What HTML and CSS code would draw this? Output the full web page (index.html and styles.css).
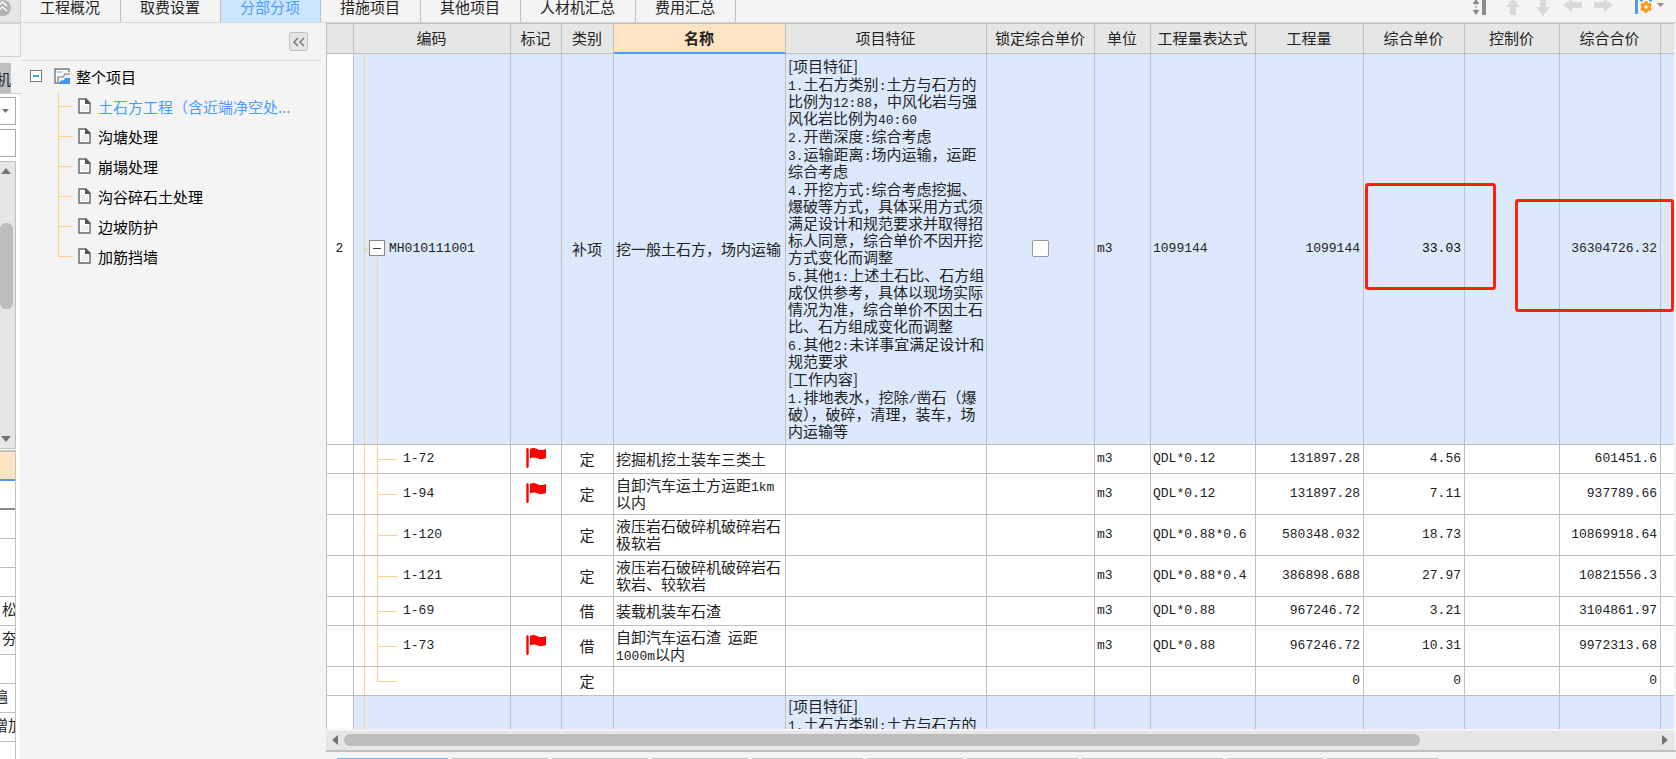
FILE: index.html
```html
<!DOCTYPE html>
<html lang="zh-CN">
<head>
<meta charset="utf-8">
<title>分部分项</title>
<link rel="stylesheet" href="styles.css">
</head>
<body>
<header class="topbar">
  <button class="fold" aria-label="收起"><svg width="13" height="17" viewBox="0 0 13 17"><circle cx="3" cy="8" r="8" fill="#b3b3b3"/><path d="M-2 6l4.500-4L7 6M-2 11l4.500-4L7 11" fill="none" stroke="#fff" stroke-width="1.600"/></svg></button>
  <nav class="tabs">
    <button class="tab">工程概况</button><button class="tab">取费设置</button><button class="tab active">分部分项</button><button class="tab">措施项目</button><button class="tab">其他项目</button><button class="tab">人材机汇总</button><button class="tab">费用汇总</button>
  </nav>
  <div class="tools">
    <button aria-label="行高"><svg width="20" height="16" viewBox="0 0 20 16"><path d="M3-1l3.500 5h-7zM3 15l3.500-5h-7z" fill="#8c8c8c"/><path d="M3 3v8" stroke="#8c8c8c" stroke-dasharray="2 1"/><path d="M9 0h4v15H9z" fill="#8c8c8c"/></svg></button>
    <button aria-label="上移"><svg width="20" height="16" viewBox="0 0 20 16"><path d="M10-2l7 9h-4v8H7V7H3z" fill="#d9d9d9"/></svg></button>
    <button aria-label="下移"><svg width="20" height="16" viewBox="0 0 20 16"><path d="M10 16l7-9h-4V0H7v7H3z" fill="#d9d9d9"/></svg></button>
    <button aria-label="左移"><svg width="20" height="16" viewBox="0 0 20 16"><path d="M0 5l9-6v3h10v6H9v4z" fill="#d9d9d9"/></svg></button>
    <button aria-label="右移"><svg width="20" height="16" viewBox="0 0 20 16"><path d="M20 5l-9-6v3H1v6h10v4z" fill="#d9d9d9"/></svg></button>
    <button class="set" aria-label="设置"><svg width="30" height="16" viewBox="0 0 30 16"><path d="M0 0h3v14H0z" fill="#4a9cf8"/><path d="M5 0h3M14 0h3" stroke="#4a9cf8" stroke-width="3"/><g fill="#f99d27"><circle cx="11" cy="7" r="4.500"/><circle cx="11" cy="3" r="2"/><circle cx="11" cy="11" r="2"/><circle cx="7.500" cy="5" r="2"/><circle cx="14.500" cy="5" r="2"/><circle cx="7.500" cy="9" r="2"/><circle cx="14.500" cy="9" r="2"/></g><circle cx="11" cy="7" r="1.700" fill="#fff"/><path d="M22 3h7l-3.500 4z" fill="#8c8c8c"/></svg></button>
  </div>
</header>
<div class="work">
  <aside class="strip">
    <div class="strip-head"></div>
    <div class="strip-tab"><span>机</span></div>
    <div class="strip-body">
      <button class="combo" aria-label="选择"><svg width="7" height="4" viewBox="0 0 7 4"><path d="M0 0h7L3.500 4z" fill="#777"/></svg></button>
      <input class="field" aria-label="查找">
      <div class="vscroll">
        <svg width="10" height="6" viewBox="0 0 10 6"><path d="M0 6h10L5 0z" fill="#73737d"/></svg>
        <i class="vthumb"></i>
        <svg width="10" height="6" viewBox="0 0 10 6"><path d="M0 0h10L5 6z" fill="#73737d"/></svg>
      </div>
      <ul class="mini">
        <li class="mini-head"></li><li class="dark"></li><li></li><li></li><li></li><li>松</li><li>夯</li><li></li><li class="cut">遍</li><li class="cut">增加</li><li></li>
      </ul>
    </div>
  </aside>
  <aside class="side">
    <div class="side-head"><button class="collapse" aria-label="折叠"><svg width="12" height="10" viewBox="0 0 12 10"><path d="M5 1L1 5l4 4M11 1L7 5l4 4" fill="none" stroke="#777" stroke-width="1.500"/></svg></button></div>
    <div class="root">
      <button class="exp" aria-label="展开"></button>
      <svg width="16" height="16" viewBox="0 0 16 16"><path d="M15 4V1H1v14h5" fill="#f8f8f8" stroke="#777" stroke-width="1.400"/><path d="M3 3h5v2H3z" fill="#a5d4ff"/><path d="M4 14V9h5l2-3h5" fill="none" stroke="#777" stroke-width="1.200"/><path d="M6 16v-3l4-1 1-2h5v6z" fill="#3f94f7"/></svg>
      <span>整个项目</span>
    </div>
    <ul class="tree">
      <li class="on"><svg class="doc"><use href="#doc"/></svg><a href="#a">土石方工程（含近端净空处...</a></li>
      <li><svg class="doc"><use href="#doc"/></svg><a href="#b">沟塘处理</a></li>
      <li><svg class="doc"><use href="#doc"/></svg><a href="#c">崩塌处理</a></li>
      <li><svg class="doc"><use href="#doc"/></svg><a href="#d">沟谷碎石土处理</a></li>
      <li><svg class="doc"><use href="#doc"/></svg><a href="#e">边坡防护</a></li>
      <li><svg class="doc"><use href="#doc"/></svg><a href="#f">加筋挡墙</a></li>
    </ul>
  </aside>
  <main class="main">
    <div class="grid">
      <table>
        <colgroup><col class="c27"><col class="c157"><col class="c51"><col class="c52"><col class="c172"><col class="c201"><col class="c108"><col class="c56"><col class="c105"><col class="c108"><col class="c101"><col class="c95"><col class="c101"><col></colgroup>
        <thead><tr><th></th><th>编码</th><th>标记</th><th>类别</th><th class="cur">名称</th><th>项目特征</th><th>锁定综合单价</th><th>单位</th><th>工程量表达式</th><th>工程量</th><th>综合单价</th><th>控制价</th><th>综合合价</th><th></th></tr></thead>
        <tbody>
          <tr class="item big"><td class="no">2</td><td class="code parent"><button class="minus" aria-label="折叠"></button>MH010111001</td><td></td><td class="mid">补项</td><td>挖一般土石方，场内运输</td>
            <td class="feat"><div class="paras"><p>[项目特征]</p><p><b>1.</b>土石方类别<b>:</b>土方与石方的<br>比例为<b>12:88</b>，中风化岩与强<br>风化岩比例为<b>40:60</b></p><p><b>2.</b>开凿深度<b>:</b>综合考虑</p><p><b>3.</b>运输距离<b>:</b>场内运输，运距<br>综合考虑</p><p><b>4.</b>开挖方式<b>:</b>综合考虑挖掘、<br>爆破等方式，具体采用方式须<br>满足设计和规范要求并取得招<br>标人同意，综合单价不因开挖<br>方式变化而调整</p><p><b>5.</b>其他<b>1:</b>上述土石比、石方组<br>成仅供参考，具体以现场实际<br>情况为准，综合单价不因土石<br>比、石方组成变化而调整</p><p><b>6.</b>其他<b>2:</b>未详事宜满足设计和<br>规范要求</p><p>[工作内容]</p><p><b>1.</b>排地表水，挖除<b>/</b>凿石（爆<br>破），破碎，清理，装车，场<br>内运输等</p></div></td>
            <td class="mid"><input type="checkbox" class="ck" aria-label="锁定综合单价"></td><td class="m">m3</td><td class="m">1099144</td><td class="num">1099144</td><td class="num strong">33.03</td><td></td><td class="num">36304726.32</td><td></td></tr>
          <tr class="short"><td></td><td class="code sub">1-72</td><td class="mid"><svg class="flag"><use href="#flag"/></svg></td><td class="mid">定</td><td>挖掘机挖土装车三类土</td><td></td><td></td><td class="m">m3</td><td class="m">QDL*0.12</td><td class="num">131897.28</td><td class="num">4.56</td><td></td><td class="num">601451.6</td><td></td></tr>
          <tr class="tall"><td></td><td class="code sub">1-94</td><td class="mid"><svg class="flag"><use href="#flag"/></svg></td><td class="mid">定</td><td>自卸汽车运土方运距<b>1km</b><br>以内</td><td></td><td></td><td class="m">m3</td><td class="m">QDL*0.12</td><td class="num">131897.28</td><td class="num">7.11</td><td></td><td class="num">937789.66</td><td></td></tr>
          <tr class="tall"><td></td><td class="code sub">1-120</td><td></td><td class="mid">定</td><td>液压岩石破碎机破碎岩石<br>极软岩</td><td></td><td></td><td class="m">m3</td><td class="m">QDL*0.88*0.6</td><td class="num">580348.032</td><td class="num">18.73</td><td></td><td class="num">10869918.64</td><td></td></tr>
          <tr class="tall"><td></td><td class="code sub">1-121</td><td></td><td class="mid">定</td><td>液压岩石破碎机破碎岩石<br>软岩、较软岩</td><td></td><td></td><td class="m">m3</td><td class="m">QDL*0.88*0.4</td><td class="num">386898.688</td><td class="num">27.97</td><td></td><td class="num">10821556.3</td><td></td></tr>
          <tr class="short"><td></td><td class="code sub">1-69</td><td></td><td class="mid">借</td><td>装载机装车石渣</td><td></td><td></td><td class="m">m3</td><td class="m">QDL*0.88</td><td class="num">967246.72</td><td class="num">3.21</td><td></td><td class="num">3104861.97</td><td></td></tr>
          <tr class="tall"><td></td><td class="code sub">1-73</td><td class="mid"><svg class="flag"><use href="#flag"/></svg></td><td class="mid">借</td><td>自卸汽车运石渣 &nbsp;运距<br><b>1000m</b>以内</td><td></td><td></td><td class="m">m3</td><td class="m">QDL*0.88</td><td class="num">967246.72</td><td class="num">10.31</td><td></td><td class="num">9972313.68</td><td></td></tr>
          <tr class="short"><td></td><td class="code sub last"></td><td></td><td class="mid">定</td><td></td><td></td><td></td><td></td><td></td><td class="num">0</td><td class="num">0</td><td></td><td class="num">0</td><td></td></tr>
          <tr class="item next"><td class="no"></td><td class="code"></td><td></td><td></td><td></td><td class="feat"><div class="paras"><p>[项目特征]</p><p><b>1.</b>土石方类别<b>:</b>土方与石方的</p></div></td><td></td><td></td><td></td><td></td><td></td><td></td><td></td><td></td></tr>
        </tbody>
      </table>
      <div class="mark mark-price"></div>
      <div class="mark mark-total"></div>
    </div>
    <div class="hscroll">
      <svg width="6" height="10" viewBox="0 0 6 10"><path d="M6 0v10L0 5z" fill="#73737d"/></svg>
      <div class="track"><div class="thumb"></div></div>
      <svg width="6" height="10" viewBox="0 0 6 10"><path d="M0 0v10l6-5z" fill="#73737d"/></svg>
    </div>
    <div class="lower"><i class="w111 sel"></i><i class="w96"></i><i class="w96"></i><i class="w96"></i><i class="w111"></i><i class="w96"></i><i class="w111"></i><i class="w141"></i><i class="w96"></i><i class="w111"></i></div>
  </main>
</div>
<svg class="defs" width="0" height="0">
  <symbol id="doc" viewBox="0 0 13 16"><path d="M1 1h7l4 4v10H1z" fill="#fff" stroke="#666" stroke-width="1.400"/><path d="M7 0l6 6H7z" fill="#555"/><path d="M3 8h7M3 10h7M3 12h7" stroke="#ddd"/></symbol>
  <symbol id="flag" viewBox="0 0 20 20"><path d="M0 1q1.500-1.500 3 0v18q-1.500 1.500-3 0z" fill="#ff5050"/><path d="M1 0h1v20H1zM4 1c3-1.500 5-1 8 .5 3 1 5 .5 8-.5v9c-3 1-5 1.500-8 .5-3-1-5-1.500-8 0z" fill="#f00"/></symbol>
</svg>
</body>
</html>
```
FILE: styles.css
```css
* { box-sizing: border-box; }
body { margin: 0; height: 100vh; overflow: hidden; display: flex; flex-direction: column; background: #f4f4f4; color: #222; font: 15px/17px "Noto Sans CJK SC", sans-serif; }
button { border: 0; background: none; padding: 0; font: inherit; color: inherit; }
ul { list-style: none; margin: 0; padding: 0; }
svg { display: block; flex: none; }
.defs { position: absolute; }

.topbar { display: flex; height: 23px; flex: none; border-bottom: 1px solid #d6d6d6; }
.fold { width: 21px; background: #e6e6e6; border-right: 1px solid #d0d0d0; display: flex; }
.tabs { display: flex; flex: 1; }
.tab { display: flex; padding: 0 20px 2px 19px; line-height: 14px; border-right: 1px solid #bfbfbf; white-space: nowrap; }
.tab.active { background: #cce6ff; color: #4a9cff; }
.tools { display: flex; gap: 10px; padding-right: 11px; align-items: flex-start; }
.tools .set { margin-left: 12px; }

.work { flex: 1; min-height: 0; display: flex; }
.strip { width: 21px; flex: none; display: flex; flex-direction: column; overflow: hidden; }
.strip-head { height: 34px; flex: none; border: 1px solid #d0d0d0; border-width: 1px 1px 1px 0; }
.strip-tab { height: 37px; flex: none; padding-top: 6px; border-bottom: 1px solid #ccc; }
.strip-tab span { display: flex; justify-content: flex-end; align-items: center; width: 11px; height: 30px; background: #bfbfbf; overflow: hidden; }
.strip-body { flex: 1; min-height: 0; display: flex; flex-direction: column; background: #fff; padding: 3px 3px 0 0; margin-right: 2px; }
.combo { height: 28px; flex: none; border: 1px solid #aaa; border-left: 0; display: flex; align-items: center; padding-left: 2px; background: #fff; }
.field { height: 28px; flex: none; width: 100%; margin: 4px 0; border: 1px solid #aaa; border-left: 0; background: #fff; padding: 0; }
.vscroll { height: 288px; flex: none; display: flex; flex-direction: column; align-items: flex-start; background: #e6e6e6; border: 1px solid #bfbfbf; border-left: 0; padding: 6px 0 6px 1px; }
.vthumb { width: 13px; height: 86px; margin: 49px 0 auto -1px; border-radius: 6px; background: #bdbdbd; }
.mini { flex: 1; overflow: hidden; margin-top: 1px; border: 2px solid #bfbfbf; border-width: 2px 1px 0 0; background: #fff; }
.mini li { height: 29px; padding: 3px 0 0 2px; border-bottom: 1px solid #bfbfbf; white-space: nowrap; overflow: hidden; }
.mini .mini-head { background: #ffe4c4; border-bottom: 2px solid #4a9cff; }
.mini .dark { border-bottom: 2px solid #888; }
.mini .cut { text-indent: -9px; }

.side { width: 305px; flex: none; }
.side-head { height: 38px; margin: 0 5px 0 2px; border-bottom: 1px solid #d6d6d6; padding: 9px 13px 0 0; display: flex; justify-content: flex-end; align-items: flex-start; }
.collapse { width: 19px; height: 19px; display: flex; align-items: center; justify-content: center; background: #e6e6e6; border: 1px solid #bfbfbf; border-radius: 3px; }
.root { display: flex; align-items: center; height: 30px; padding-left: 9px; color: #000; }
.root span { margin-left: 6px; }
.exp { width: 12px; height: 12px; margin-right: 12px; border: 1px solid #777; background: linear-gradient(#37a6e0, #37a6e0) center / 6px 2px no-repeat #fff; }
.tree { margin-left: 37px; }
.tree li { position: relative; display: flex; align-items: center; height: 30px; padding-left: 20px; gap: 7px; color: #000; }
.tree li::before { content: ""; position: absolute; left: 0; top: 0; bottom: 0; border-left: 1px solid #ffcf8c; }
.tree li:last-child::before { bottom: 50%; }
.tree li::after { content: ""; position: absolute; left: 0; top: 50%; width: 15px; border-top: 1px solid #ffcf8c; }
.tree .doc { width: 13px; height: 16px; }
.tree a { color: inherit; text-decoration: none; white-space: nowrap; }
.tree .on { color: #4a9cff; }

.main { flex: 1; min-width: 0; display: flex; flex-direction: column; }
.grid { position: relative; flex: 1; min-height: 0; overflow: hidden; margin: 0 2px 2px 0; border-left: 1px solid #bfbfbf; background: #fff; border-top: 1px solid #bfbfbf; }
table { width: 100%; table-layout: fixed; border-collapse: separate; border-spacing: 0; }
.c27 { width: 27px; } .c51 { width: 51px; } .c52 { width: 52px; } .c56 { width: 56px; } .c95 { width: 95px; } .c101 { width: 101px; } .c105 { width: 105px; } .c108 { width: 108px; } .c157 { width: 157px; } .c172 { width: 172px; } .c201 { width: 201px; }
th, td { padding: 0 3px 2px 2px; border-right: 1px solid #bfbfbf; border-bottom: 1px solid #bfbfbf; white-space: nowrap; text-align: left; font-weight: 400; overflow: hidden; }
th:last-child, td:last-child { border-right: 0; }
th { height: 30px; padding: 0 1px 2px 0; background: #e6e6e6; text-align: center; }
th.cur { background: #ffe4c4; border-bottom: 2px solid #4a9cff; font-weight: 700; }
.item td { background-color: #dce9fd; }
.item td.no { background: #fff; }
.big td { height: 391px; }
.short td { height: 29px; }
.tall td { height: 41px; }
.next td { height: 391px; vertical-align: top; }
.no, .m, .num, .code, b { font: 13px/17px "Liberation Mono", "Noto Sans CJK SC", monospace; }
b { line-height: 0; }
.no, .mid { text-align: center; padding: 0 1px 2px 0; }
.num { text-align: right; }
.strong { color: #000; }
.paras { display: grid; gap: 1px; }
.next .paras { padding-top: 1px; }
p { margin: 0; }
.code { position: relative; }
.code::before { content: ""; position: absolute; left: 10px; top: 0; bottom: -1px; border-left: 1px solid #ffcf8c; }
.code.sub { padding-left: 49px; background: linear-gradient(#ffcf8c, #ffcf8c) 23px 50% / 20px 1px no-repeat; }
.code.sub::after { content: ""; position: absolute; left: 23px; top: 0; bottom: -1px; border-left: 1px solid #ffcf8c; }
.code.last::after { bottom: 50%; }
.code.parent { padding-left: 15px; background: linear-gradient(#ffcf8c, #ffcf8c) 10px 50% / 5px 1px no-repeat #dce9fd; }
.code.parent::after { content: ""; position: absolute; left: 23px; top: 50%; bottom: -1px; margin-top: 8px; border-left: 1px solid #ffcf8c; }
.minus { width: 16px; height: 16px; margin-right: 4px; vertical-align: middle; border: 1px solid #888; background: linear-gradient(#444, #444) center / 8px 1px no-repeat #fff; }
.flag { width: 20px; height: 20px; margin: 0 auto; }
.ck { appearance: none; display: block; width: 17px; height: 17px; margin: 0 auto; border: 1px solid #999; border-radius: 2px; background: #fff; }
.mark { position: absolute; border: 3px solid #ff2010; border-radius: 3px; }
.mark-price { right: 178px; top: 159px; width: 131px; height: 107px; }
.mark-total { right: 0; top: 175px; width: 159px; height: 113px; }

.hscroll { height: 19px; flex: none; display: flex; align-items: center; gap: 6px; padding: 0 6px 2px; margin-right: 2px; background: #e6e6e6; }
.track { flex: 1; }
.thumb { width: 82%; height: 12px; border-radius: 6px; background: #bdbdbd; }
.lower { flex: none; height: 9px; padding: 6px 0 0 11px; border-top: 2px solid #bfbfbf; display: flex; gap: 4px; }
.lower i { height: 1px; background: #c4c4c4; }
.lower .sel { background: #6fb0fa; }
.w96 { width: 96px; } .w111 { width: 111px; } .w141 { width: 141px; }
```
